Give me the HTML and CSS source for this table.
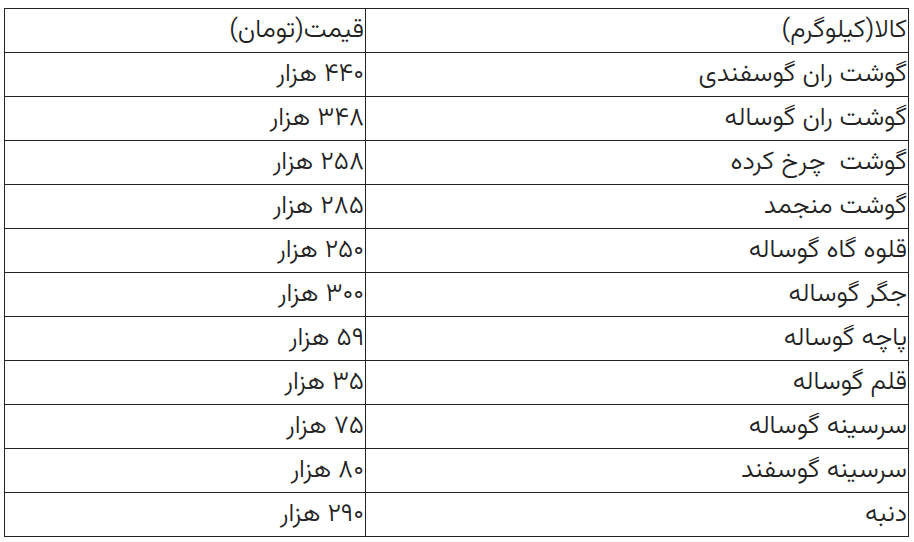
FILE: index.html
```html
<!DOCTYPE html>
<html lang="fa" dir="rtl">
<head>
<meta charset="utf-8">
<link rel="stylesheet" href="styles.css">
</head>
<body>
<table class="prices">
  <colgroup><col class="c-name"><col class="c-price"></colgroup>
  <tr><td>کالا(کیلوگرم)</td><td>قیمت(تومان)</td></tr>
  <tr><td>گوشت ران گوسفندی</td><td>۴۴۰ هزار</td></tr>
  <tr><td>گوشت ران گوساله</td><td>۳۴۸ هزار</td></tr>
  <tr><td>گوشت&nbsp; چرخ کرده</td><td>۲۵۸ هزار</td></tr>
  <tr><td>گوشت منجمد</td><td>۲۸۵ هزار</td></tr>
  <tr><td>قلوه گاه گوساله</td><td>۲۵۰ هزار</td></tr>
  <tr><td>جگر گوساله</td><td>۳۰۰ هزار</td></tr>
  <tr><td>پاچه گوساله</td><td>۵۹ هزار</td></tr>
  <tr><td>قلم گوساله</td><td>۳۵ هزار</td></tr>
  <tr><td>سرسینه گوساله</td><td>۷۵ هزار</td></tr>
  <tr><td>سرسینه گوسفند</td><td>۸۰ هزار</td></tr>
  <tr><td>دنبه</td><td>۲۹۰ هزار</td></tr>
</table>
</body>
</html>
```
FILE: styles.css
```css
html, body {
  margin: 0;
  background: #fff;
}
body {
  padding: 8px 5px 0 6px;
  font-family: "Vazirmatn", "Vazir", "Noto Sans Arabic", "DejaVu Sans", sans-serif;
  color: #222;
}
.prices {
  border-collapse: collapse;
  width: 904px;
  table-layout: fixed;
}
.c-name { width: 543px; }
.c-price { width: 361px; }
.prices td {
  border: 1px solid #222;
  height: 43px;
  padding: 0 1px 0 0;
  text-align: right;
  vertical-align: middle;
  font-size: 26px;
  font-weight: 300;
  line-height: 1;
  white-space: nowrap;
}
```
